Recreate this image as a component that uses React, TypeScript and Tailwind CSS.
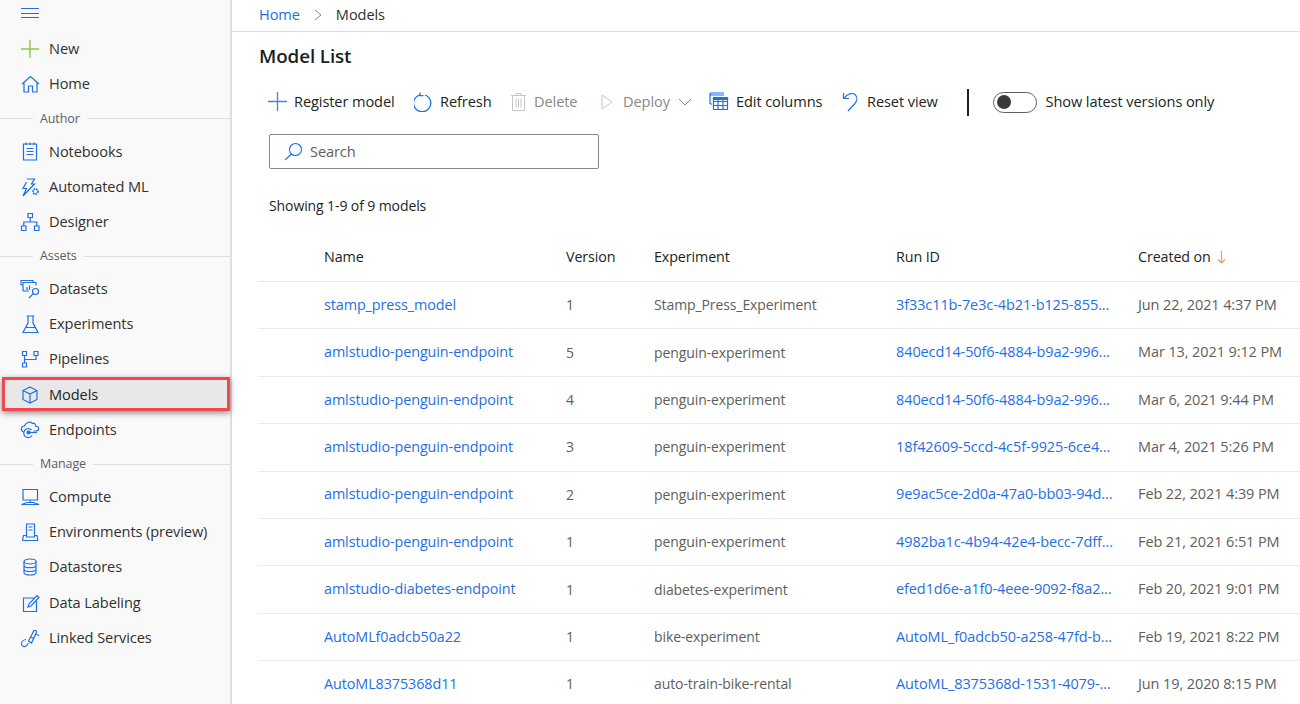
import type { ReactNode } from "react";

const blue = "#1f6fe5";

const Ico = ({ children, size = 20 }: { children: ReactNode; size?: number }) => (
  <svg width={size} height={size} viewBox="0 0 20 20" fill="none" stroke={blue} strokeWidth="1.2" className="shrink-0">
    {children}
  </svg>
);

const icons: Record<string, ReactNode> = {
  new: <path d="M10 1v18M1 10h18" stroke="#8cc84b" strokeWidth="1.4" />,
  home: <path d="M2 10 10.500 2.500 19 10M4 8.500V18h4.500v-6h4v6H17V8.500" />,
  notebooks: <path d="M3.500 3h13v16h-13zM6 1.500V4M10 1.500V4M14 1.500V4M6.500 7.500h7M6.500 10.500h7M6.500 13.500h7" />,
  automl: (
    <>
      <path d="M7 2h7.500l-3 5h3L3 19l3.500-7.500H3l3.500-6.500" />
      <circle cx="15.500" cy="14.500" r="2.500" strokeWidth="1.800" strokeDasharray="1.600 0.800" />
    </>
  ),
  designer: <path d="M8 1.500h4.500v4H8zM1.500 14H6v4.500H1.500zM14.500 14H19v4.500h-4.500zM10.200 5.500V10M3.800 14v-4h13v4" />,
  datasets: (
    <>
      <path d="M1 6V1.500h12V3M3 8V3.500h13v3M1 6h2M3 12V6M3 12h6M7 11V8M9.500 11V6.500M12 8.500V8" />
      <circle cx="15.500" cy="12.500" r="3" />
      <path d="M13.300 14.700 9 19" />
    </>
  ),
  experiments: <path d="M6.500 2h8M8 2v7L3 18.500h15L13 9V2M6 13.500h9" />,
  pipelines: <path d="M2.500 2.500h4v4h-4zM14 2.500h4v4h-4zM2.500 14h4v4h-4zM4.500 6.500V14M4.500 10.500H16v-4" />,
  models: <path d="M10 2 17 5.500v9L10 18l-7-3.500v-9zM3 5.500 10 9l7-3.500M10 9v9" />,
  endpoints: (
    <>
      <path d="M3.500 12C0 10.500 1 6 4.500 6 5.500 2.500 10 1 12.500 3.500c1-.800 3.500 0 3 2.500 3.500 0 4.500 4 1 5h-3" />
      <path d="M12 15.500a4.500 4.500 0 1 1-.500-5.500" />
      <circle cx="8.500" cy="12.500" r="1.500" fill={blue} />
      <path d="M8.500 12.500H17" />
    </>
  ),
  compute: <path d="M3 2.500h14.500v10.500H3zM10.200 13v2.500M1.500 17.500 7 15.500h6.500l5.500 2zM1.500 17.500h17.500" />,
  environments: <path d="M6.500 2h8v13h-8zM8.500 5h4M8.500 8h4M2.500 18.500l1-5H6.500M18 18.500l-1-5H14.500M2.500 18.500H18M6.500 15h8" />,
  datastores: (
    <>
      <ellipse cx="10" cy="4.500" rx="6" ry="2.500" />
      <path d="M4 4.500v11c0 1.400 2.700 2.500 6 2.500s6-1.100 6-2.500v-11M4 8.200c0 1.400 2.700 2.500 6 2.500s6-1.100 6-2.500M4 12c0 1.400 2.700 2.500 6 2.500s6-1.100 6-2.500" />
    </>
  ),
  labeling: <path d="M15 5H3.500v13.500h13V8M8 14l1-3 8-8.500 2 2-8 8.500z" />,
  linked: (
    <>
      <path d="M6 11.500c-2.500.500-5 2.500-4.500 5 .500 2.500 4 2.800 5.500.500l1.500-2" />
      <path d="M8.500 13 13.500 3.500c1-2 3.500-1 3 1L11.500 15zM10.500 9l3 1.500M16.500 6.500c1 0 2 .500 2.500 1.500" />
    </>
  ),
};

const nav: ({ h: string } | { i: string; t: string; on?: boolean })[] = [
  { i: "new", t: "New" },
  { i: "home", t: "Home" },
  { h: "Author" },
  { i: "notebooks", t: "Notebooks" },
  { i: "automl", t: "Automated ML" },
  { i: "designer", t: "Designer" },
  { h: "Assets" },
  { i: "datasets", t: "Datasets" },
  { i: "experiments", t: "Experiments" },
  { i: "pipelines", t: "Pipelines" },
  { i: "models", t: "Models", on: true },
  { i: "endpoints", t: "Endpoints" },
  { h: "Manage" },
  { i: "compute", t: "Compute" },
  { i: "environments", t: "Environments (preview)" },
  { i: "datastores", t: "Datastores" },
  { i: "labeling", t: "Data Labeling" },
  { i: "linked", t: "Linked Services" },
];

const rows = [
  ["stamp_press_model", "1", "Stamp_Press_Experiment", "3f33c11b-7e3c-4b21-b125-855...", "Jun 22, 2021 4:37 PM"],
  ["amlstudio-penguin-endpoint", "5", "penguin-experiment", "840ecd14-50f6-4884-b9a2-996...", "Mar 13, 2021 9:12 PM"],
  ["amlstudio-penguin-endpoint", "4", "penguin-experiment", "840ecd14-50f6-4884-b9a2-996...", "Mar 6, 2021 9:44 PM"],
  ["amlstudio-penguin-endpoint", "3", "penguin-experiment", "18f42609-5ccd-4c5f-9925-6ce4...", "Mar 4, 2021 5:26 PM"],
  ["amlstudio-penguin-endpoint", "2", "penguin-experiment", "9e9ac5ce-2d0a-47a0-bb03-94d...", "Feb 22, 2021 4:39 PM"],
  ["amlstudio-penguin-endpoint", "1", "penguin-experiment", "4982ba1c-4b94-42e4-becc-7dff...", "Feb 21, 2021 6:51 PM"],
  ["amlstudio-diabetes-endpoint", "1", "diabetes-experiment", "efed1d6e-a1f0-4eee-9092-f8a2...", "Feb 20, 2021 9:01 PM"],
  ["AutoMLf0adcb50a22", "1", "bike-experiment", "AutoML_f0adcb50-a258-47fd-b...", "Feb 19, 2021 8:22 PM"],
  ["AutoML8375368d11", "1", "auto-train-bike-rental", "AutoML_8375368d-1531-4079-...", "Jun 19, 2020 8:15 PM"],
];

const cols = "grid grid-cols-[66px_242px_88px_242px_242px_1fr]";

const Tool = ({ icon, label, off, w, gap = "gap-[7px]" }: { icon: ReactNode; label: string; off?: boolean; w: string; gap?: string }) => (
  <div className={`flex items-center ${gap} ${w} ${off ? "text-[#8a8886]" : "text-[#201f1e]"}`}>
    {icon}
    <span>{label}</span>
  </div>
);

export default function App() {
  return (
    <div className="flex h-[704px] w-[1300px] overflow-hidden bg-white text-[14.600px] text-[#323130] [font-family:'Open_Sans',sans-serif] tracking-[-0.1px]">
      <aside className="w-[232px] shrink-0 border-r-2 border-[#dedede] bg-[#f9f9f9] pt-[6px]">
        <div className="ml-[21px] flex h-[14px] w-[18px] flex-col justify-between py-[2px]">
          <div className="h-px bg-[#1f6fe5]" />
          <div className="h-px bg-[#1f6fe5]" />
          <div className="h-px bg-[#1f6fe5]" />
        </div>
        <div className="mt-[11.500px]">
          {nav.map((n) =>
            "h" in n ? (
              <div key={n.h} className="flex h-[32px] items-center gap-[7px] pt-[2px] text-[12.500px] text-[#605e5c]">
                <div className="h-px w-[33px] bg-[#dedede]" />
                <span>{n.h}</span>
                <div className="h-px flex-1 bg-[#dedede]" />
              </div>
            ) : (
              <div key={n.t} className="relative flex h-[35.200px] items-center pl-[20px]">
                {n.on && (
                  <div className="absolute top-[-0.500px] right-0 bottom-[1px] left-[2px] border-[3px] border-[#f4474d] bg-[#e8e8e8] shadow-[0_2px_6px_rgba(0,0,0,0.45)]" />
                )}
                <div className="relative flex items-center gap-[9px]">
                  <Ico>{icons[n.i]}</Ico>
                  <span className={n.on ? "font-medium text-[#252423]" : ""}>{n.t}</span>
                </div>
              </div>
            ),
          )}
        </div>
      </aside>

      <main className="flex-1">
        <div className="flex h-[32px] items-center border-b border-[#dddddd] pb-[2px] pl-[27px]">
          <span className="text-[#1f6fe5]">Home</span>
          <svg width="10" height="14" viewBox="0 0 10 14" fill="none" stroke="#8a8886" className="mx-[13px]">
            <path d="M2 2l6 5-6 5" />
          </svg>
          <span>Models</span>
        </div>

        <h1 className="mt-[11px] pl-[27px] text-[18.800px] leading-[26px] font-semibold text-[#201f1e]">Model List</h1>

        <div className="mt-[17px] flex h-[32px] items-center pl-[36px]">
          <Tool
            w="w-[146px]"
            label="Register model"
            icon={
              <svg width="19" height="19" viewBox="0 0 19 19" stroke="#4d7fe6" fill="none" strokeWidth="1.300">
                <path d="M9.500 0v19M0 9.500h19" />
              </svg>
            }
          />
          <Tool
            w="w-[95px]"
            label="Refresh"
            icon={
              <svg width="19" height="20" viewBox="0 0 19 20" stroke={blue} fill="none" strokeWidth="1.300">
                <path d="M6 2.800a8.600 8.600 0 1 0 5 .200M6 .500v3.200h3.500" />
              </svg>
            }
          />
          <Tool
            w="w-[89px]"
            off
            gap="gap-[6px]"
            label="Delete"
            icon={
              <svg width="19" height="19" viewBox="0 0 19 19" stroke="#c8c6c4" fill="none">
                <path d="M2 3.500h15M7 3.500V1.500h5v2M3.500 3.500v15h12v-15M7 6.500v9M9.500 6.500v9M12 6.500v9" />
              </svg>
            }
          />
          <div className="flex w-[111px] items-center">
            <Tool
              w=""
              off
              label="Deploy"
              icon={
                <svg width="17" height="18" viewBox="0 0 17 18" stroke="#c8c6c4" fill="none" className="ml-[1px]">
                  <path d="M3 2l10 7-10 7z" />
                </svg>
              }
            />
            <svg width="14" height="8" viewBox="0 0 14 8" stroke="#8a8886" fill="none" className="ml-[8px]">
              <path d="M1 1l6 6 6-6" />
            </svg>
          </div>
          <Tool
            w="w-[133px]"
            label="Edit columns"
            icon={
              <svg width="20" height="19" viewBox="0 0 20 19" stroke={blue} fill="none" strokeWidth="1.200">
                <path d="M1 1h14M1 3h14M1 1v11M1 12h2M4.500 5.500h14v12h-14zM4.500 9.500h14M4.500 13.500h14M9 5.500v12M14 5.500v12" />
                <path d="M4.500 5.500h14v2h-14z" fill={blue} />
              </svg>
            }
          />
          <Tool
            w="w-[125px]"
            label="Reset view"
            icon={
              <svg width="18" height="21" viewBox="0 0 18 21" stroke={blue} fill="none" strokeWidth="1.200">
                <path d="M2 7.500C5 2.500 10.500 1.500 13 3.500c3 2.500 2 6.500-.500 9.500L6 20M1.500 2v5.500H7" />
              </svg>
            }
          />
          <div className="h-[27px] w-[1.500px] bg-[#201f1e]" />
          <div className="ml-[24px] flex h-[21px] w-[44px] items-center rounded-full border border-[#605e5c] pl-[3px]">
            <div className="size-[14px] rounded-full bg-[#3b3a39]" />
          </div>
          <span className="ml-[9px] text-[#201f1e]">Show latest versions only</span>
        </div>

        <div className="mt-[16px] ml-[37px] flex h-[35px] w-[330px] items-center gap-[7px] rounded-[2px] border border-[#8a8886] pl-[14px] text-[#605e5c]">
          <svg width="19" height="19" viewBox="0 0 19 19" stroke={blue} fill="none" strokeWidth="1.100">
            <circle cx="11.500" cy="7.500" r="6" />
            <path d="M7.500 12 1 18" />
          </svg>
          <span className="pt-[1px]">Search</span>
        </div>

        <div className="mt-[27px] ml-[37px] text-[14px] leading-[20px] text-[#201f1e]">Showing 1-9 of 9 models</div>

        <div className="mt-[23px] ml-[26px]">
          <div className={`${cols} h-[43px] items-center border-b border-[#e6e6e6] pb-[7px] text-[14.300px] font-medium text-[#201f1e]`}>
            <div />
            <div>Name</div>
            <div>Version</div>
            <div>Experiment</div>
            <div>Run ID</div>
            <div className="flex items-center gap-[6px] whitespace-nowrap">
              Created on
              <svg width="9" height="14" viewBox="0 0 9 14" stroke="#e8a15c" fill="none" strokeWidth="1.200">
                <path d="M4.500 1v12M1 9.500l3.500 3.500L8 9.500" />
              </svg>
            </div>
          </div>
          {rows.map((r, i) => (
            <div key={i} className={`${cols} h-[47.400px] items-center border-b border-[#ededed] pb-[1px] whitespace-nowrap`}>
              <div />
              <div className="text-[14.400px] text-[#1f6fe5]">{r[0]}</div>
              <div className="text-[14px] text-[#605e5c]">{r[1]}</div>
              <div className="text-[14px] text-[#605e5c]">{r[2]}</div>
              <div className="text-[14.500px] text-[#1f6fe5]">{r[3]}</div>
              <div className="text-[14.500px] text-[#605e5c]">{r[4]}</div>
            </div>
          ))}
        </div>
      </main>
    </div>
  );
}
